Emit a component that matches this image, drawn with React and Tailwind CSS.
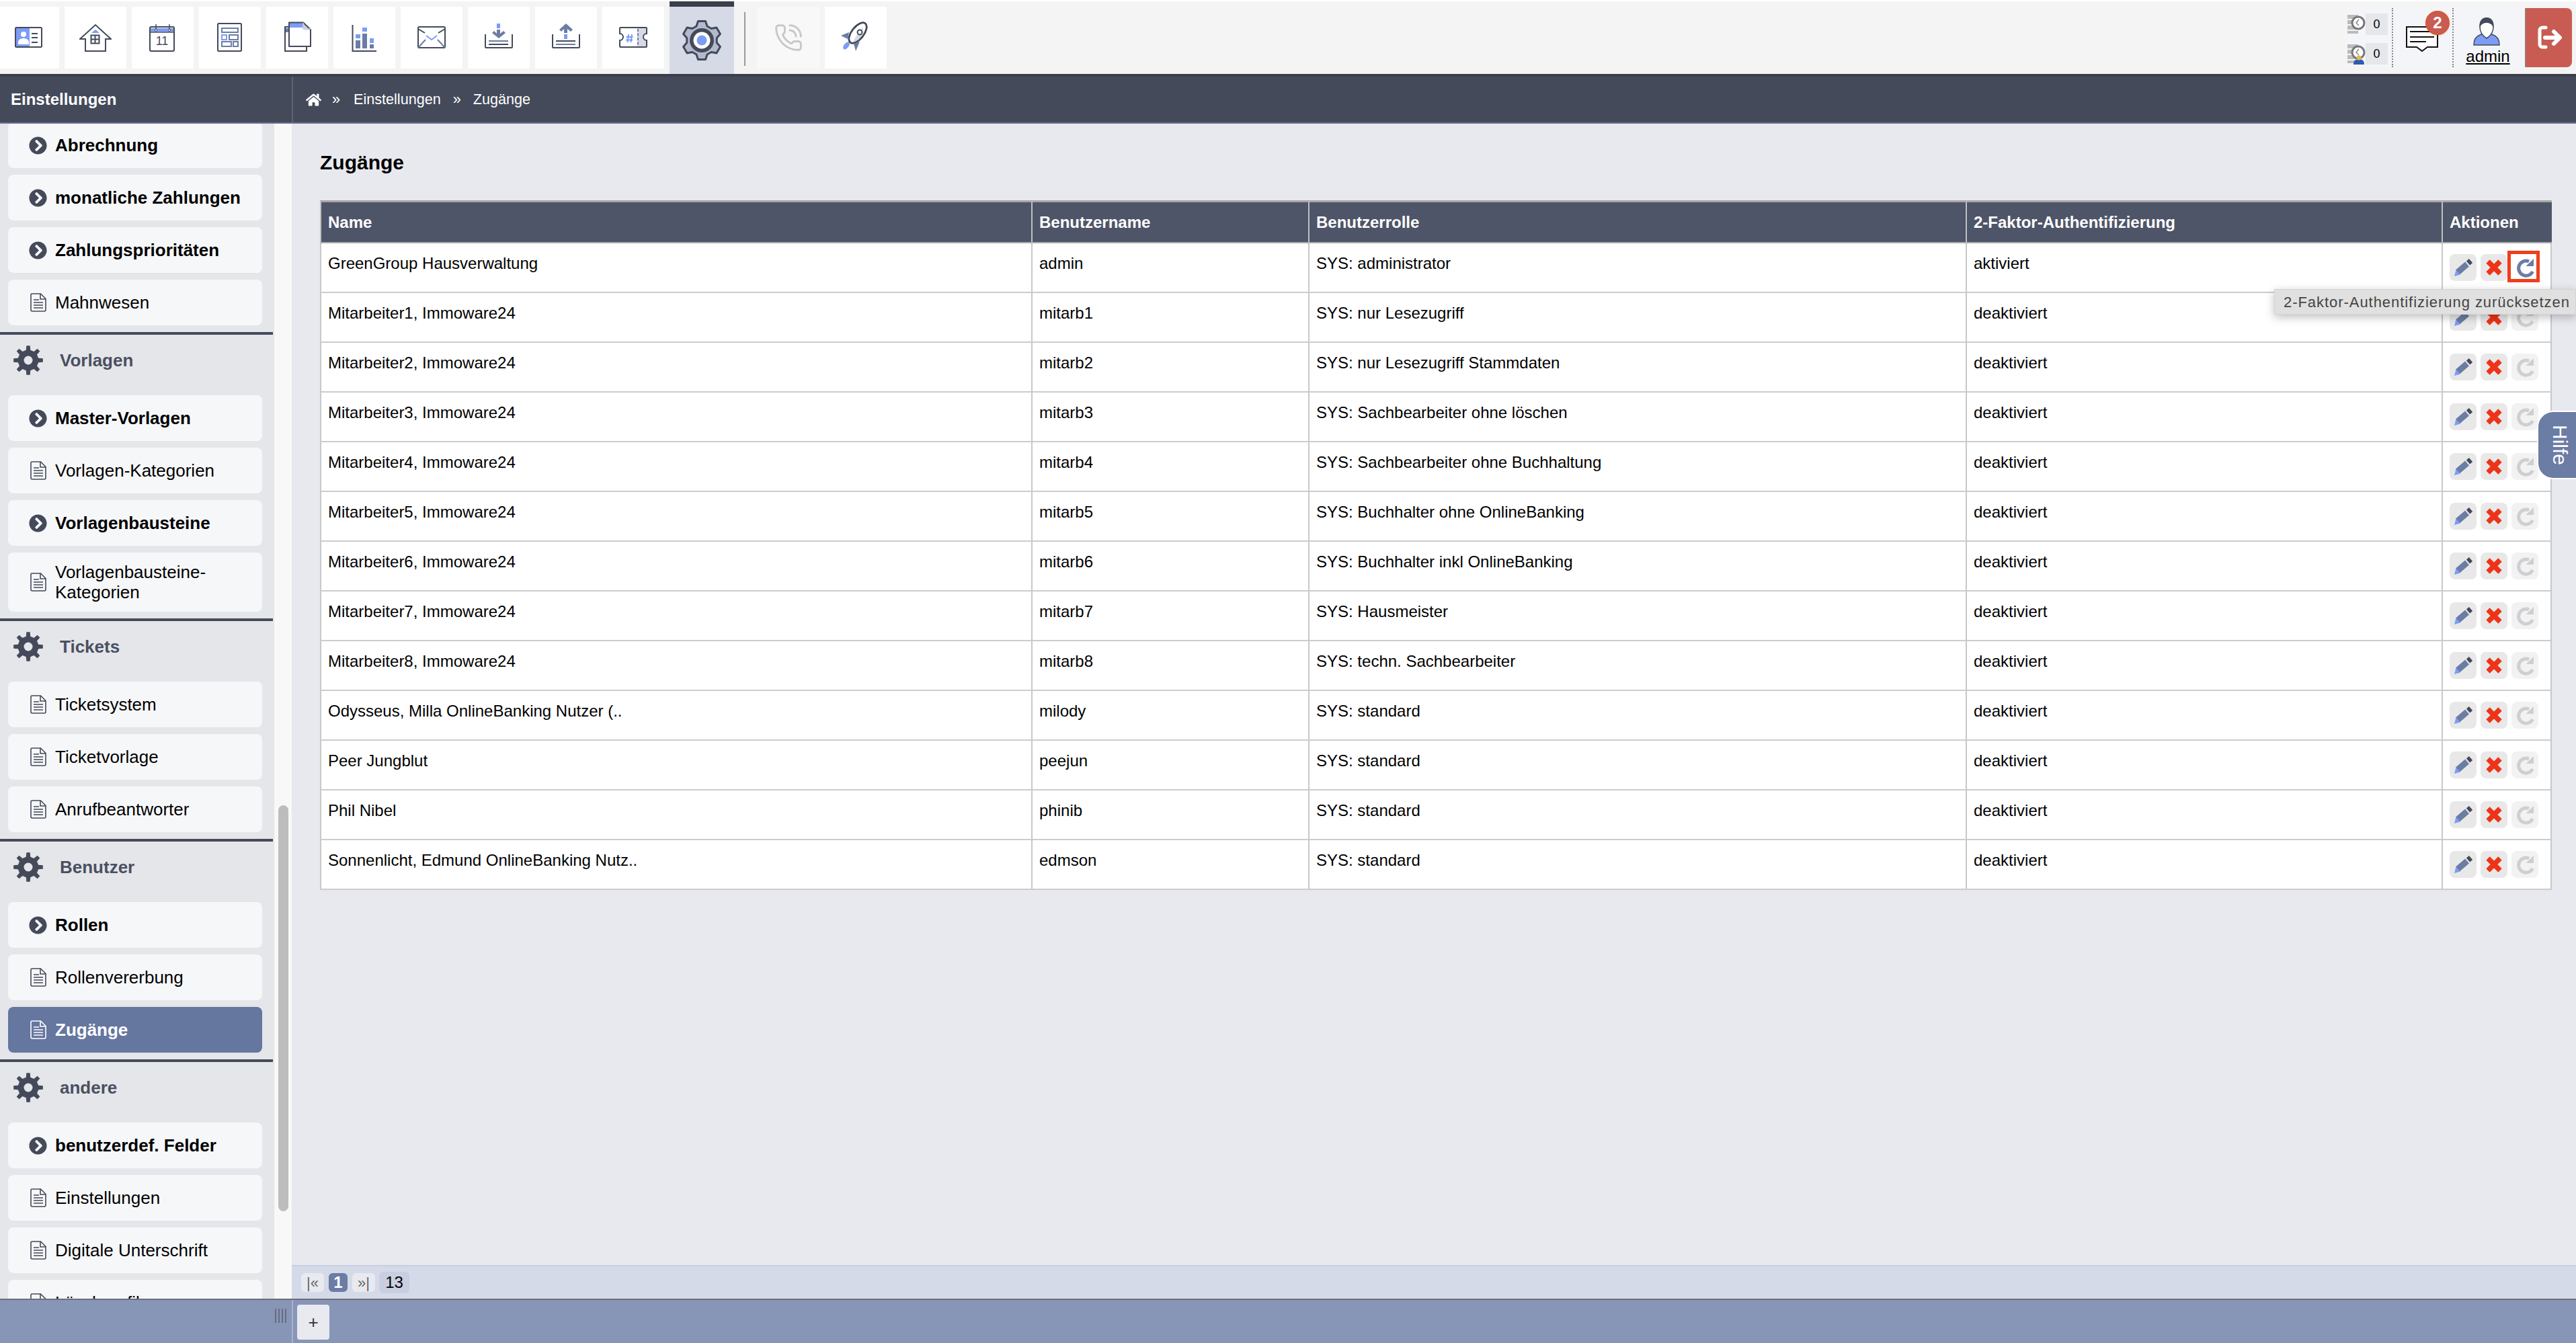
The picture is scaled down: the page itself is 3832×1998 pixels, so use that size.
import React from 'react';
import { FaChevronCircleRight, FaHome } from 'react-icons/fa';
import { PhoneCall } from 'lucide-react';

const NAVY = '#444a5a';
const BLUE = '#7c9cf5';
const SLATE = '#6b7ca5';

const gearPath = (teeth, rOuter, rRoot, tip, base, start) => {
  const pt = (r, deg) => {
    const a = (deg * Math.PI) / 180;
    return `${(32 + r * Math.cos(a)).toFixed(2)} ${(32 + r * Math.sin(a)).toFixed(2)}`;
  };
  const parts = [];
  for (let i = 0; i < teeth; i++) {
    const c = start + (360 / teeth) * i;
    parts.push(pt(rRoot, c - base), pt(rOuter, c - tip), pt(rOuter, c + tip), pt(rRoot, c + base));
  }
  return `M${parts.join('L')}Z`;
};

const sections = [
  {
    items: [
      { label: 'Abrechnung', bold: true },
      { label: 'monatliche Zahlungen', bold: true },
      { label: 'Zahlungsprioritäten', bold: true },
      { label: 'Mahnwesen' },
    ],
  },
  {
    title: 'Vorlagen',
    items: [
      { label: 'Master-Vorlagen', bold: true },
      { label: 'Vorlagen-Kategorien' },
      { label: 'Vorlagenbausteine', bold: true },
      { label: 'Vorlagenbausteine-Kategorien' },
    ],
  },
  {
    title: 'Tickets',
    items: [{ label: 'Ticketsystem' }, { label: 'Ticketvorlage' }, { label: 'Anrufbeantworter' }],
  },
  {
    title: 'Benutzer',
    items: [{ label: 'Rollen', bold: true }, { label: 'Rollenvererbung' }, { label: 'Zugänge', active: true }],
  },
  {
    title: 'andere',
    items: [
      { label: 'benutzerdef. Felder', bold: true },
      { label: 'Einstellungen' },
      { label: 'Digitale Unterschrift' },
      { label: 'Löschprofile' },
    ],
  },
];

const rows = [
  ['GreenGroup Hausverwaltung', 'admin', 'SYS: administrator', 'aktiviert'],
  ['Mitarbeiter1, Immoware24', 'mitarb1', 'SYS: nur Lesezugriff', 'deaktiviert'],
  ['Mitarbeiter2, Immoware24', 'mitarb2', 'SYS: nur Lesezugriff Stammdaten', 'deaktiviert'],
  ['Mitarbeiter3, Immoware24', 'mitarb3', 'SYS: Sachbearbeiter ohne löschen', 'deaktiviert'],
  ['Mitarbeiter4, Immoware24', 'mitarb4', 'SYS: Sachbearbeiter ohne Buchhaltung', 'deaktiviert'],
  ['Mitarbeiter5, Immoware24', 'mitarb5', 'SYS: Buchhalter ohne OnlineBanking', 'deaktiviert'],
  ['Mitarbeiter6, Immoware24', 'mitarb6', 'SYS: Buchhalter inkl OnlineBanking', 'deaktiviert'],
  ['Mitarbeiter7, Immoware24', 'mitarb7', 'SYS: Hausmeister', 'deaktiviert'],
  ['Mitarbeiter8, Immoware24', 'mitarb8', 'SYS: techn. Sachbearbeiter', 'deaktiviert'],
  ['Odysseus, Milla OnlineBanking Nutzer (..', 'milody', 'SYS: standard', 'deaktiviert'],
  ['Peer Jungblut', 'peejun', 'SYS: standard', 'deaktiviert'],
  ['Phil Nibel', 'phinib', 'SYS: standard', 'deaktiviert'],
  ['Sonnenlicht, Edmund OnlineBanking Nutz..', 'edmson', 'SYS: standard', 'deaktiviert'],
];

const Svg48 = ({ children }) => (
  <svg width="48" height="48" viewBox="0 0 48 48" fill="none" stroke={NAVY} strokeWidth="2">
    {children}
  </svg>
);

const tools = [
  <Svg48 key="card">
    <rect x="5" y="9" width="21" height="29" fill={BLUE} stroke="none" />
    <rect x="5" y="9" width="39" height="29" rx="1.5" />
    <circle cx="17" cy="19" r="4" fill="#fff" stroke="none" />
    <path d="M9 34v-3c0-4 4-6 8-6s8 2 8 6v3z" fill="#fff" stroke="none" />
    <path d="M29 18h9M29 24h9M29 31h9" />
  </Svg48>,
  <Svg48 key="home">
    <path d="M24 12l6 5H18z" fill={BLUE} stroke="none" />
    <path d="M1 26L24 5l23 21h-8v18H9V26z" strokeLinejoin="miter" />
    <path d="M17.5 20.5h12v12h-12zM23.5 20.5v12M17.5 26.5h12" />
  </Svg48>,
  <Svg48 key="calendar">
    <rect x="5" y="10" width="36" height="5" fill={BLUE} stroke="none" />
    <rect x="5" y="8" width="36" height="36" rx="2" />
    <path d="M5 16h36" strokeWidth="1.5" />
    <path d="M14 4v9M34 4v9" strokeWidth="1.5" />
    <circle cx="14" cy="13" r="1.6" fill="#fff" strokeWidth="1" />
    <circle cx="34" cy="13" r="1.6" fill="#fff" strokeWidth="1" />
    <text x="23" y="35" textAnchor="middle" fontSize="18" fill={NAVY} stroke="none" fontFamily="Liberation Sans">11</text>
  </Svg48>,
  <Svg48 key="form">
    <rect x="6" y="3" width="35" height="41" rx="1.5" />
    <g stroke={SLATE}>
      <rect x="12" y="10" width="24" height="6" />
      <rect x="12" y="20" width="7" height="7" stroke={BLUE} />
      <rect x="23" y="20" width="13" height="7" />
      <rect x="12" y="30" width="14" height="7" />
      <rect x="29" y="30" width="7" height="7" />
    </g>
  </Svg48>,
  <Svg48 key="copy">
    <rect x="6" y="10" width="6" height="6" fill={SLATE} stroke="none" />
    <path d="M12 8H6v36h32v-6" />
    <path d="M33 12V3l11 10z" fill="#c9cfe0" stroke="none" />
    <rect x="13" y="2" width="20" height="7" fill={BLUE} stroke="none" />
    <path d="M13 1.5h20l11 10.5v25H12V1.5z" strokeLinejoin="round" />
    <path d="M33 2v9h11" stroke="#c9cfe0" strokeWidth="1.5" />
  </Svg48>,
  <Svg48 key="chart">
    <path d="M6.5 5v39H42" />
    <g stroke="none">
      <rect x="11" y="19" width="7" height="6" fill={BLUE} />
      <rect x="11" y="28" width="7" height="12" fill={SLATE} />
      <rect x="21" y="9" width="7" height="6" fill={BLUE} />
      <rect x="21" y="18" width="7" height="22" fill={SLATE} />
      <rect x="32" y="25" width="6" height="7" fill={BLUE} />
      <rect x="32" y="34" width="6" height="6" fill={SLATE} />
    </g>
  </Svg48>,
  <Svg48 key="mail">
    <rect x="4" y="8" width="40" height="31" rx="1.5" />
    <path d="M4 11l10 6M44 11l-10 6" />
    <path d="M16 21l8 6 8-6" stroke={BLUE} />
    <path d="M4 39l11-12M44 39L33 27" stroke={SLATE} />
  </Svg48>,
  <Svg48 key="down">
    <path d="M4 19v19a1 1 0 0 0 1 1h38a1 1 0 0 0 1-1V19" />
    <path d="M9 29h29" stroke={SLATE} />
    <path d="M9 34h29" />
    <rect x="21" y="3" width="5" height="7" fill={BLUE} stroke="none" />
    <path d="M21 12h5v6l5-4 3 3-10 8-10-8 3-3 4 4z" fill={SLATE} stroke="none" />
  </Svg48>,
  <Svg48 key="up">
    <path d="M4 19v19a1 1 0 0 0 1 1h38a1 1 0 0 0 1-1V19" />
    <path d="M9 29h29" />
    <path d="M9 34h29" stroke={SLATE} />
    <rect x="21" y="19" width="5" height="7" fill={BLUE} stroke="none" />
    <path d="M24 3l10 9-3 3-5-4v6h-5v-6l-4 4-3-3z" fill={SLATE} stroke="none" />
  </Svg48>,
  <Svg48 key="ticket">
    <path d="M30 9h13a1 1 0 0 1 1 1v8a5 5 0 0 0 0 10v9a1 1 0 0 1-1 1H30z" fill="#d6dae6" stroke="none" />
    <path d="M5 9h38a1 1 0 0 1 1 1v8a5 5 0 0 0 0 10v9a1 1 0 0 1-1 1H5a1 1 0 0 1-1-1v-9a5 5 0 0 0 0-10v-8a1 1 0 0 1 1-1z" />
    <path d="M31 11v26" stroke={SLATE} strokeDasharray="4 2.5" />
    <path d="M17 19l-1.5 12M22 19l-1.5 12M13.5 23h10M13 27.5h10" stroke={BLUE} />
  </Svg48>,
];

const SettingsGear = () => (
  <svg width="64" height="64" viewBox="0 0 64 64">
    <path d={gearPath(6, 29, 22.5, 11, 21, -90)} fill="#b3bace" stroke={NAVY} strokeWidth="3" strokeLinejoin="round" />
    <circle cx="32" cy="32" r="18" fill={NAVY} />
    <circle cx="32" cy="32" r="12.5" fill="#fff" />
    <circle cx="32" cy="32" r="7.5" fill={BLUE} />
  </svg>
);

const Rocket = () => (
  <Svg48>
    <ellipse cx="27" cy="17" rx="9" ry="18" transform="rotate(38 27 17)" fill="#fff" strokeWidth="2.5" />
    <path d="M20 29l14-21c2 9-2 18-10 24z" fill="#d6dae6" stroke="none" />
    <ellipse cx="27" cy="17" rx="9" ry="18" transform="rotate(38 27 17)" strokeWidth="2.5" />
    <circle cx="30" cy="16" r="3.5" fill="#fff" strokeWidth="2" />
    <path d="M2 21l12-5-2 10z" fill={SLATE} stroke="none" />
    <path d="M24 44l-3-11 9-3z" fill={SLATE} stroke="none" />
    <ellipse cx="10" cy="36" rx="3.5" ry="6.5" transform="rotate(38 10 36)" fill={BLUE} stroke="none" />
  </Svg48>
);

const DocIcon = ({ color }) => (
  <svg width="24" height="28" viewBox="0 0 24 28" fill="none" stroke={color} strokeWidth="1.6">
    <path d="M2.5 1h13l7.5 7.5V25a2 2 0 0 1-2 2H3a2 2 0 0 1-2-2V2.500A1.500 1.500 0 0 1 2.500 1z" />
    <path d="M15 1v8h8" />
    <path d="M5 10h8M5 14h14M5 18h14M5 22h14" strokeWidth="1.500" />
  </svg>
);

const SideItem = ({ item }) => {
  const cls = item.active ? 'bg-[#65769f] text-white font-bold' : item.bold ? 'bg-[#f6f7f9] text-black font-bold' : 'bg-[#f6f7f9] text-black';
  return (
    <div className={`flex min-h-[68px] w-[378px] items-center gap-[12px] rounded-lg py-[14px] pl-[31px] pr-[16px] text-[26px] leading-[30px] ${cls}`}>
      <span className="flex w-[27px] shrink-0 justify-center">
        {item.bold ? <FaChevronCircleRight size={27} color={NAVY} /> : <DocIcon color={item.active ? '#ffffff' : NAVY} />}
      </span>
      <span>{item.label}</span>
    </div>
  );
};

const Sidebar = () => (
  <div className="h-full w-[408px] shrink-0 overflow-hidden bg-[#e5e6ea]">
    <div className="-mt-[2px]">
      {sections.map((s, i) => (
        <div key={i}>
          {s.title && (
            <div className="flex h-[90px] items-start gap-[25px] pl-[20px] pt-[16px]">
              <svg width="44" height="44" viewBox="10 10 44 44">
                <path fillRule="evenodd" d={`${gearPath(8, 22, 15.5, 7, 12, -90)}M32 25.500a6.500 6.500 0 1 0 0 13a6.500 6.500 0 1 0 0-13z`} fill={NAVY} />
              </svg>
              <span className="text-[26px] font-bold leading-[44px] text-[#4a5062]">{s.title}</span>
            </div>
          )}
          <div className="flex flex-col gap-[10px] pl-[12px]">
            {s.items.map((it) => (
              <SideItem key={it.label} item={it} />
            ))}
          </div>
          <div className="mt-[10px] h-[4px] w-[406px] bg-[#444a5a]" />
        </div>
      ))}
    </div>
  </div>
);

const Pencil = () => (
  <svg width="40" height="40" viewBox="0 0 40 40" fill="none">
    <path d="M12 27l14-12" stroke={SLATE} strokeWidth="9" />
    <path d="M7 33l2.500-9.500 6.500 7z" fill={BLUE} />
    <path d="M27.500 13.500l4-3.500" stroke={NAVY} strokeWidth="8" />
  </svg>
);

const Cross = () => (
  <svg width="40" height="40" viewBox="0 0 40 40" fill="none">
    <path d="M11 11l18 18M29 11L11 29" stroke="#ee3318" strokeWidth="7.500" />
  </svg>
);

const Reset = ({ color }) => (
  <svg width="40" height="40" viewBox="0 0 40 40" fill="none">
    <path d="M31.500 26A11 11 0 1 1 26 11" stroke={color} strokeWidth="5" />
    <path d="M33 7v11H21.500z" fill={color} />
  </svg>
);

const Actions = ({ first }) => (
  <div className="flex gap-[6px] pl-[10px] pt-[16px]">
    <div className="h-[40px] w-[40px] rounded-lg bg-[#e8e8e8]"><Pencil /></div>
    <div className="h-[40px] w-[40px] rounded-lg bg-[#e8e8e8]"><Cross /></div>
    {first ? (
      <div className="relative h-[40px] w-[40px] bg-white">
        <Reset color={SLATE} />
        <div className="absolute -left-[6px] -top-[5px] h-[47px] w-[48px] border-[5px] border-[#ee3f1c]" />
      </div>
    ) : (
      <div className="h-[40px] w-[40px] rounded-lg bg-[#f2f2f2]"><Reset color="#cdcfd2" /></div>
    )}
  </div>
);

const TH = ({ children, last, firstCol }) => (
  <th className={`h-[64px] border-b-2 border-t-[3px] border-b-[#aaaaaa] border-t-[#a6a6a6] pl-[10px] text-left align-middle text-[24px] font-bold text-white ${last ? '' : 'border-r-2 border-r-[#c0c0c0]'} ${firstCol ? 'border-l-2 border-l-[#c0c0c0]' : ''}`}>
    {children}
  </th>
);

const TD = ({ children, firstCol }) => (
  <td className={`h-[74px] border-b-2 border-r-2 border-b-[#cccccc] border-r-[#c8c8c8] pl-[10px] pt-[15px] align-top text-[24px] leading-[30px] text-black ${firstCol ? 'border-l-2 border-l-[#c8c8c8]' : ''}`}>
    {children}
  </td>
);

const StatClock = ({ person }) => (
  <svg width="27" height="32" viewBox="0 0 27 32" fill="none">
    <path d="M0 2h16v6H0zM0 10h12v6H0zM0 18h12v6H0zM0 26h16v4H0z" fill="#bbbbbb" />
    <circle cx="16" cy="14" r="9" fill="#fff" stroke="#777" strokeWidth="3" />
    <path d="M17 9l-4 5 4 4" stroke="#888" strokeWidth="1.500" />
    {person && (
      <>
        <path d="M9 32c0-6 3-8 8-8s8 2 8 8z" fill="#2f5bb0" />
        <circle cx="17" cy="22" r="3.500" fill="#e5b84a" />
      </>
    )}
  </svg>
);

const Counter = ({ person }) => (
  <div className="flex h-[32px] items-center">
    <StatClock person={person} />
    <span className="flex h-[32px] w-[33px] items-center justify-center bg-[#e5e7eb] text-[18px] leading-none text-black">0</span>
  </div>
);

export default function App() {
  return (
    <div className="flex h-[1998px] w-[3832px] flex-col overflow-hidden bg-white font-['Liberation_Sans',Arial,sans-serif]">
      {/* toolbar */}
      <div className="mt-[2px] flex h-[108px] shrink-0 items-start bg-[#f4f4f4]">
        <div className="ml-[-4px] mt-[8px] flex gap-[8px]">
          {tools.map((icon, i) => (
            <div key={i} className="flex h-[92px] w-[92px] items-center justify-center bg-white">{icon}</div>
          ))}
        </div>
        <div className="ml-[8px] flex h-[108px] w-[96px] items-center justify-center border-t-[8px] border-t-[#3a3f4b] bg-[#d6dae6]">
          <SettingsGear />
        </div>
        <div className="ml-[15px] mt-[16px] h-[80px] w-[2px] bg-[#999999]" />
        <div className="ml-[17px] mt-[8px] flex h-[92px] w-[94px] items-center justify-center bg-[#f8f8f8]">
          <PhoneCall size={44} color="#c8c8c8" strokeWidth={1.6} />
        </div>
        <div className="ml-[7px] mt-[8px] flex h-[92px] w-[92px] items-center justify-center bg-white">
          <Rocket />
        </div>
        <div className="ml-auto mr-[6px] mt-[10px] flex h-[88px] items-stretch bg-[#f4f5f8]">
          <div className="flex w-[66px] flex-col gap-[12px] pt-[8px]">
            <Counter />
            <Counter person />
          </div>
          <div className="relative flex w-[90px] items-start justify-center border-l-2 border-dotted border-l-[#888888] pt-[26px]">
            <svg width="50" height="40" viewBox="0 0 50 40" fill="none" className="-ml-[2px]">
              <path d="M2 2h46v30H33l-8 6-8-6H2z" fill="#fff" stroke="#111" strokeWidth="2" />
              <path d="M7 9h36M7 17h36M7 24h24" stroke="#111" strokeWidth="2" />
            </svg>
            <span className="absolute left-[48px] top-[4px] flex h-[36px] w-[36px] items-center justify-center rounded-full border-2 border-[#d9562b] bg-[#c85c52] text-[24px] font-bold text-white shadow-sm">2</span>
          </div>
          <div className="flex w-[108px] flex-col items-center border-l-2 border-dotted border-l-[#888888] pr-[4px] pt-[14px]">
            <svg width="42" height="42" viewBox="0 0 42 42" fill="none" className="-ml-[4px]">
              <path d="M2 41c0-9 3-13 9-15l7-3h6l7 3c6 2 9 6 9 15z" fill={BLUE} stroke={NAVY} strokeWidth="1.500" />
              <path d="M11 14c0 9 5 14 10 17 5-3 10-8 10-17 0-8-4-13-10-13S11 6 11 14z" fill="#fff" stroke={NAVY} strokeWidth="1.500" />
              <path d="M11 15C9 6 14 0 21 0s12 6 10 15c-2-5-5-7-10-7s-8 2-10 7z" fill={NAVY} />
            </svg>
            <span className="mt-[3px] text-[24px] leading-[26px] text-black underline">admin</span>
          </div>
          <div className="flex w-[70px] items-center justify-center rounded-r-lg border-l-2 border-dotted border-l-[#888888] bg-[#c85c52]">
            <svg width="48" height="48" viewBox="0 0 48 48" fill="none" stroke="#fff" strokeLinecap="round" strokeLinejoin="round">
              <path d="M19 9h-5a4 4 0 0 0-4 4v21a4 4 0 0 0 4 4h5" strokeWidth="5" />
              <path d="M18 24h21M31 15l9 9-9 9" strokeWidth="6" />
            </svg>
          </div>
        </div>
      </div>

      {/* title bar */}
      <div className="flex h-[74px] shrink-0 border-b-2 border-t-4 border-b-[#6b7291] border-t-[#3a3f4b] bg-[#444a5a] text-white">
        <div className="flex w-[434px] items-center pl-[16px] text-[24px] font-bold">Einstellungen</div>
        <div className="flex flex-1 items-center border-l-2 border-l-[#5d6479] pl-[19px] text-[21.6px]">
          <FaHome size={23} />
          <span className="ml-[16px]">»</span>
          <span className="ml-[20px]">Einstellungen</span>
          <span className="ml-[18px]">»</span>
          <span className="ml-[18px]">Zugänge</span>
        </div>
      </div>

      {/* body */}
      <div className="flex min-h-0 flex-1">
        <Sidebar />
        <div className="w-[26px] shrink-0 bg-[#f8f8f8]">
          <div className="ml-[6px] mt-[1014px] h-[604px] w-[15px] rounded-full bg-[#bdbdbd]" />
        </div>
        <div className="flex min-w-0 flex-1 flex-col bg-[#e8e9ef]">
          <div className="flex-1 pl-[42px] pr-[36px] pt-[40px]">
            <h1 className="mb-[38px] text-[30px] font-bold leading-[36px] text-black">Zugänge</h1>
            <table className="w-[3320px] table-fixed border-separate border-spacing-0 bg-white">
              <colgroup>
                <col className="w-[1060px]" />
                <col className="w-[412px]" />
                <col className="w-[978px]" />
                <col className="w-[708px]" />
                <col className="w-[162px]" />
              </colgroup>
              <thead className="bg-[#4f5568]">
                <tr>
                  <TH firstCol>Name</TH>
                  <TH>Benutzername</TH>
                  <TH>Benutzerrolle</TH>
                  <TH>2-Faktor-Authentifizierung</TH>
                  <TH last>Aktionen</TH>
                </tr>
              </thead>
              <tbody>
                {rows.map((r, i) => (
                  <tr key={r[1]}>
                    <TD firstCol>{r[0]}</TD>
                    <TD>{r[1]}</TD>
                    <TD>{r[2]}</TD>
                    <TD>{r[3]}</TD>
                    <td className="h-[74px] border-b-2 border-r-2 border-b-[#cccccc] border-r-[#c8c8c8] p-0 align-top">
                      <Actions first={i === 0} />
                    </td>
                  </tr>
                ))}
              </tbody>
            </table>
          </div>
          <div className="flex h-[50px] shrink-0 items-center gap-[7px] border-t-2 border-t-[#c8cfe3] bg-[#d5dae8] pl-[14px]">
            <span className="flex h-[28px] w-[34px] items-center justify-center rounded-md bg-[#e8eaf0] text-[22px] text-[#666666]">|«</span>
            <span className="flex h-[28px] w-[28px] items-center justify-center rounded-md bg-[#6b7ca5] text-[24px] font-bold text-white">1</span>
            <span className="flex h-[28px] w-[34px] items-center justify-center rounded-md bg-[#e8eaf0] text-[22px] text-[#666666]">»|</span>
            <span className="-my-[2px] ml-[-1px] flex h-[32px] w-[45px] items-center justify-center rounded-md bg-[#c9cfe0] text-[24px] text-black">13</span>
          </div>
        </div>
      </div>

      {/* bottom bar */}
      <div className="flex h-[66px] shrink-0 border-t-2 border-t-[#6c6f78] bg-[#8795b7]">
        <div className="flex w-[434px] items-start justify-end gap-[3px] pr-[8px] pt-[13px]">
          <span className="h-[21px] w-[2px] bg-[#666c7c]" />
          <span className="h-[21px] w-[2px] bg-[#666c7c]" />
          <span className="h-[21px] w-[2px] bg-[#666c7c]" />
          <span className="h-[21px] w-[2px] bg-[#666c7c]" />
        </div>
        <div className="flex-1 border-l-2 border-l-[#aab3cc] pl-[6px] pt-[7px]">
          <div className="flex h-[52px] w-[48px] items-center justify-center rounded bg-[#e8eaf0] text-[26px] text-[#333333]">+</div>
        </div>
      </div>

      {/* overlays */}
      <div className="absolute left-[3383px] top-[430px] flex h-[38px] w-[449px] items-center border border-[#d4d4d4] bg-[#e0e0e0] pl-[13px] text-[22px] tracking-[0.95px] text-[#444444] shadow-[0_4px_14px_rgba(0,0,0,0.25)]">
        2-Faktor-Authentifizierung zurücksetzen
      </div>
      <div className="absolute left-[3774px] top-[611px] flex h-[102px] w-[58px] items-center justify-center rounded-l-[24px] border-2 border-r-0 border-white bg-[#6b7ca5] pl-[8px] text-[30px] text-white [writing-mode:vertical-rl]">
        Hilfe
      </div>
    </div>
  );
}
